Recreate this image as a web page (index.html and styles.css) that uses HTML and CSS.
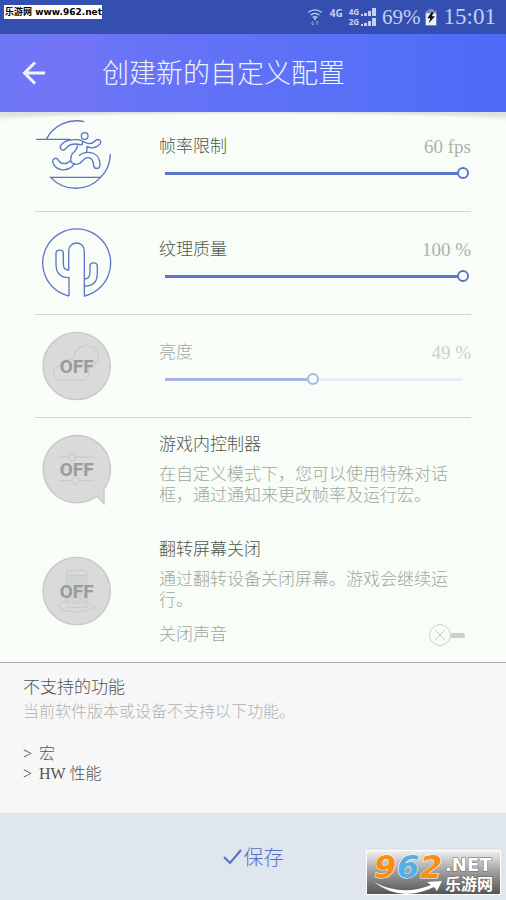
FILE: index.html
```html
<!DOCTYPE html>
<html lang="zh-CN">
<head>
<meta charset="utf-8">
<meta name="viewport" content="width=device-width, initial-scale=1">
<title>创建新的自定义配置</title>
<link rel="stylesheet" href="styles.css">
</head>
<body>
<div class="status">
  <svg class="wifi" width="14" height="17" viewBox="0 0 42 51" fill="none" stroke="currentColor" stroke-width="4">
    <path d="M1 10Q21-5 41 10M8 18Q21 8 34 18M14 26Q21 20 28 26"/>
    <path d="M21 26v6" stroke-width="6"/>
    <path d="M15 36v12l-5-6M27 48V36l5 6" stroke-width="3" opacity=".6"/>
  </svg>
  <span class="net">4G</span>
  <span class="sims">
    <span class="sim">4G<svg width="15" height="8" viewBox="0 0 15 8"><path d="M0 6h2v2H0zM3 5h3v3H3zM7 3h3v5H7zM11 0h4v8h-4z" fill="currentColor"/></svg></span>
    <span class="sim">2G<svg width="15" height="8" viewBox="0 0 15 8"><path d="M0 6h2v2H0zM3 5h3v3H3zM7 3h3v5H7zM11 0h4v8h-4z" fill="currentColor"/></svg></span>
  </span>
  <span class="level">69%</span>
  <svg class="battery" width="12" height="17" viewBox="0 0 36 51">
    <path d="M11 0h14v5h9v10H2V5h9z" fill="#8090cc"/>
    <path d="M2 13h32v36H2z" fill="#eaf3fc"/>
    <path d="M20 9L7 28h9l-5 15 19-21H20l6-11z" fill="#101010"/>
  </svg>
  <time class="clock">15:01</time>
</div>
<header class="bar">
  <button class="back" type="button" aria-label="返回">
    <svg width="24" height="24" viewBox="0 0 24 24" fill="none" stroke="currentColor" stroke-width="3"><path d="M23 12H3M13 1.500L2.500 12 13 22.500"/></svg>
  </button>
  <h1>创建新的自定义配置</h1>
</header>
<main class="settings">
  <section class="row first">
    <svg class="icon" viewBox="48 36 228 228">
      <path d="M193 35A102 102 0 0 0 79 88M48 88H151M271 132A102 102 0 0 1 242 202H92A102 102 0 0 0 242 202"/>
      <circle cx="194" cy="78" r="10"/>
      <path d="M185 105C170 101 155 101 146 107L135 118C125 125 116 113 124 104C138 88 154 89 172 89C188 90 192 99 207 101C216 102 220 98 226 92C236 83 248 94 239 103C227 116 213 115 201 110L200 126"/>
      <path d="M187 95V105M173 106Q171 119 157 131C150 140 154 151 151 153C140 163 124 164 116 152C110 139 94 146 99 158C107 181 137 186 156 170L163 161"/>
      <path d="M177 137C184 130 192 127 203 127C228 127 240 143 240 166C238 179 222 178 221 166C220 151 214 143 203 143C188 143 188 162 170 163C157 163 153 157 151 151"/>
    </svg>
    <div class="body">
      <div class="head"><label for="fps">帧率限制</label><output for="fps">60 fps</output></div>
      <input id="fps" class="slider" type="range" min="0" max="60" value="60" style="--fill:100%">
    </div>
  </section>
  <section class="row">
    <svg class="icon" viewBox="48 346 228 228">
      <path d="M147 559A102 102 0 1 1 193 559V424C193 392 146 392 146 424V481C131 480 130 472 130 459V431C130 418 108 418 108 431V463C108 491 123 504 147 504V559"/>
      <path d="M193 508C207 508 210 500 210 487V470C210 456 232 456 232 470V492C232 519 216 529 193 529"/>
    </svg>
    <div class="body">
      <div class="head"><label for="texture">纹理质量</label><output for="texture">100 %</output></div>
      <input id="texture" class="slider" type="range" min="0" max="100" value="100" style="--fill:100%">
    </div>
  </section>
  <section class="row off">
    <svg class="icon" viewBox="48 54 228 228">
      <circle class="disc" cx="170" cy="168" r="101"/>
      <path class="hint" d="M118 210C94 210 94 168 120 168C130 143 164 140 174 164C200 158 209 172 206 188C206 204 199 210 188 210ZM165 139L163 124 175 121 180 109 191 112 201 102 210 112 223 110 226 122 237 128 232 139 238 151 226 156 222 166 209 164"/>
      <text x="170" y="188">OFF</text>
    </svg>
    <div class="body">
      <div class="head"><label for="bright">亮度</label><output for="bright">49 %</output></div>
      <input id="bright" class="slider" type="range" min="0" max="100" step="any" value="49.5" style="--fill:49.5%">
    </div>
  </section>
  <section class="row">
    <svg class="icon" viewBox="48 363 228 228">
      <path class="disc" d="M230 559A101 101 0 1 1 252 537V581Z"/>
      <path class="hint" d="M118 441H145M168 441H222M118 477H184M208 477H222M118 512H155M178 512H222"/>
      <circle class="hint" cx="156" cy="442" r="11"/><circle class="hint" cx="196" cy="477" r="11"/><circle class="hint" cx="166" cy="512" r="11"/>
      <text x="170" y="498">OFF</text>
    </svg>
    <div class="body">
      <h2>游戏内控制器</h2>
      <p>在自定义模式下，您可以使用特殊对话框，通过通知来更改帧率及运行宏。</p>
    </div>
  </section>
  <section class="row last">
    <svg class="icon" viewBox="48 72 228 228">
      <circle class="disc" cx="170" cy="186" r="101"/>
      <path class="phone" d="M142 140H198V218H142Z"/>
      <path class="hint" d="M139 223V134Q139 124 149 124H191Q201 124 201 134V235H139M139 139H201M139 222H201M139 217C112 223 110 237 127 243C155 252 190 249 211 240L230 235M205 224L230 235"/>
      <text x="170" y="206">OFF</text>
    </svg>
    <div class="body">
      <h2>翻转屏幕关闭</h2>
      <p>通过翻转设备关闭屏幕。游戏会继续运行。</p>
      <div class="mute"><label for="mute">关闭声音</label><input id="mute" class="switch" type="checkbox"></div>
    </div>
  </section>
</main>
<section class="unsupported">
  <h2>不支持的功能</h2>
  <p>当前软件版本或设备不支持以下功能。</p>
  <ul>
    <li>宏</li>
    <li>HW 性能</li>
  </ul>
</section>
<footer class="actions">
  <button class="save" type="button">
    <svg width="20" height="16" viewBox="0 0 20 16" fill="none" stroke="currentColor" stroke-width="2"><path d="M1 8l6 6L18 1"/></svg>保存
  </button>
</footer>
<div class="site-tag">乐游网 www.962.net</div>
<svg class="site-logo" width="135" height="45" viewBox="0 0 135 45" role="img" aria-label="962.NET 乐游网">
  <defs>
    <linearGradient id="plate" x2="0" y2="1"><stop offset="0" stop-color="#f0f0f0"/><stop offset=".5" stop-color="#9c9c9c"/><stop offset="1" stop-color="#555"/></linearGradient>
  </defs>
  <path d="M0 0H135V45H0Z" fill="#fff"/>
  <path d="M1 1H134V44H1Z" fill="url(#plate)"/>
  <g class="digits"><text x="8" y="28" fill="#fb8f13">9</text><text x="31" y="28" fill="#55aee6">6</text><text x="54" y="28" fill="#fb8f13">2</text></g>
  <path d="M8 32Q36 47 65 35L61 32 76 31 71 41 68 37Q35 53 8 32Z" fill="#fff"/>
  <text class="net-name" x="79" y="21">.NET</text>
  <text class="cn-name" x="79" y="40">乐游网</text>
</svg>
</body>
</html>
```

FILE: styles.css
```css
* { box-sizing: border-box; }

body {
  margin: 0;
  min-height: 100vh;
  display: flex;
  flex-direction: column;
  position: relative;
  background: #f8fdf7;
  color: #50554f;
  font-family: "Liberation Serif", "Noto Sans CJK SC", serif;
  font-size: 17px;
  font-weight: 300;
}

h1, h2, p, ul { margin: 0; padding: 0; font-weight: inherit; }
button { border: 0; padding: 0; background: none; font: inherit; cursor: pointer; }
svg { flex: none; }

.status {
  height: 34px;
  padding-right: 10px;
  display: flex;
  align-items: center;
  justify-content: flex-end;
  background: #354fb0;
  color: #c3d2f2;
}
.wifi { margin-right: 8px; }
.net, .sims { font: bold 8px/10px "Noto Sans", sans-serif; }
.net { margin: 0 6px 8px 0; font-size: 10px; }
.sims { display: grid; margin-right: 6px; }
.sim { display: flex; align-items: center; gap: 2px; }
.level { font-size: 21px; margin-right: 4px; }
.battery { margin-right: 7px; }
.clock { font-size: 23px; }

.bar {
  position: relative;
  height: 78px;
  padding-left: 22px;
  display: flex;
  align-items: center;
  gap: 56px;
  background: linear-gradient(90deg, #6f77f6, #7275f5 15%, #6874f6 25%, #6372f6 40%, #5570f7 75%, #4c6af7);
  color: #eef5ff;
}
.bar::after {
  content: "";
  position: absolute;
  inset: 100% 0 auto;
  height: 9px;
  background: radial-gradient(ellipse 65% 100% at 50% 100%, #f8fdf7 70%, #dee2de);
}
.back { display: flex; color: inherit; }
h1 { font-size: 27px; line-height: 36px; padding-top: 2px; }

.settings { padding: 0 35px; }
.row {
  display: grid;
  grid-template-columns: 76px 1fr;
  column-gap: 48px;
  padding: 13px 0;
  border-bottom: 1px solid #d3d9d2;
}
.row.first { position: relative; padding-top: 10px; }
.icon {
  width: 76px;
  height: 76px;
  margin-left: 1px;
  overflow: visible;
  fill: none;
  stroke: #5b76c4;
  stroke-width: 4;
}
.icon .disc { fill: #d9dad9; stroke: #c5c8c5; }
.icon .hint { stroke: #c6c9c6; stroke-width: 3; }
.icon .phone { fill: #d0d5d0; stroke: none; }
.icon text {
  font: bold 57px Roboto, sans-serif;
  text-anchor: middle;
  fill: #9a9b9a;
  stroke: none;
}
.head {
  display: flex;
  justify-content: space-between;
  margin: 13px 0 4px;
  line-height: 24px;
}
.head output { font-size: 19px; color: #adb2ac; }
.off .head label { color: #a4a9a3; }
.off .head output { color: #cdd1cc; }

.slider {
  --line: #5b76c4;
  --rest: #ebedf6;
  display: block;
  appearance: none;
  width: calc(100% - 2px);
  height: 20px;
  margin: 0;
  background: linear-gradient(90deg, var(--line) var(--fill), var(--rest) var(--fill)) center / calc(100% - 12px) 3px no-repeat;
}
.slider::-webkit-slider-thumb {
  appearance: none;
  width: 12px;
  height: 12px;
  border: 2px solid var(--line);
  border-radius: 50%;
  background: #f8fdf7;
}
.off .slider { --line: #a9b5e2; }

h2 { font-size: 17px; line-height: 24px; }
.body h2 { margin: 2px 0 7px; }
.body p { line-height: 21px; padding-right: 12px; color: #a1a7a0; }
.row:nth-child(4) { padding-bottom: 16px; border: 0; }
.row.last { align-items: center; padding-bottom: 17px; border: 0; }
.mute {
  display: flex;
  align-items: center;
  justify-content: space-between;
  margin-top: 14px;
  padding-right: 6px;
  line-height: 20px;
  color: #a1a7a0;
}
.switch {
  appearance: none;
  display: flex;
  align-items: center;
  width: 36px;
  height: 20px;
  margin: 0;
}
.switch::before {
  content: "";
  width: 20px;
  height: 20px;
  border: 1px solid #cdd1cc;
  border-radius: 50%;
  background:
    linear-gradient(45deg, transparent 47%, #c5cac4 47% 53%, transparent 53%) center / 10px 10px no-repeat,
    linear-gradient(135deg, transparent 47%, #c5cac4 47% 53%, transparent 53%) center / 10px 10px no-repeat;
}
.switch::after {
  content: "";
  flex: 1;
  height: 5px;
  border-radius: 0 3px 3px 0;
  background: #cdd1cc;
}

.unsupported {
  flex: 1;
  padding: 13px 23px 29px;
  border-top: 1px solid #abb2aa;
  background: #f7f7f7;
}
.unsupported p { font-size: 16px; line-height: 24px; color: #b0b2b0; }
.unsupported ul { margin-top: 20px; list-style: none; font-size: 16px; line-height: 20px; }
.unsupported li { display: flex; gap: 7px; }
.unsupported li::before { content: ">"; }

.actions {
  height: 87px;
  display: grid;
  place-items: center;
  background: #dfe6ee;
}
.save { display: flex; align-items: center; gap: 1px; font-size: 20px; color: #566fc4; }

.site-tag {
  position: absolute;
  left: 4px;
  top: 5px;
  padding-left: 1px;
  background: #fff;
  color: #000;
  font: bold 9px/14px "DejaVu Sans", "Noto Sans CJK SC", sans-serif;
  white-space: nowrap;
}
.site-logo { position: absolute; right: 5px; bottom: 5px; overflow: visible; }
.digits { font: italic bold 32px "DejaVu Sans", sans-serif; stroke: #fff; stroke-width: 1; paint-order: stroke; }
.net-name, .cn-name { fill: #fff; stroke: #666; stroke-width: 1; paint-order: stroke; }
.net-name { font: bold 18px "DejaVu Sans", sans-serif; }
.cn-name { font: bold 16px "Noto Sans CJK SC", sans-serif; }
```
